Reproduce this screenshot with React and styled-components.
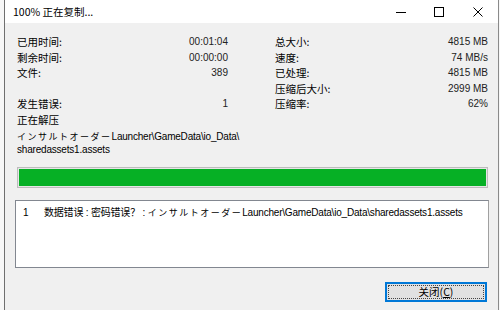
import React from "react";
import styled, { createGlobalStyle } from "styled-components";

const Global = createGlobalStyle`
  html, body { margin: 0; padding: 0; background: #f4f4f4; }
  #root { width: 500px; height: 310px; overflow: hidden; }
  * { box-sizing: border-box; }
`;

const Page = styled.div`
  display: flex;
  width: 500px;
  height: 310px;
  background: #f7f7f7;
  font-family: "Noto Sans CJK SC", "Noto Sans", sans-serif;
  color: #000;
`;

const Strip = styled.div`
  width: ${(p) => p.$w}px;
  flex: none;
  background: #f7f7f7;
`;

const Win = styled.div`
  width: 495px;
  flex: none;
  display: flex;
  flex-direction: column;
  border-left: 1px solid #6f6f6f;
  border-right: 1px solid #8a8a8a;
  background: #f0f0f0;
`;

const TitleBar = styled.div`
  height: 23px;
  background: #fff;
  display: flex;
  align-items: center;
  padding-left: 8px;
`;

const Title = styled.div`
  flex: 1;
  font-size: 10.5px;
  line-height: 12px;
  padding-top: 1px;
`;

const Ctrl = styled.div`
  width: ${(p) => p.$w}px;
  height: 23px;
  display: flex;
  align-items: center;
  justify-content: center;
  flex: none;
`;

const Body = styled.div`
  flex: 1;
  display: flex;
  flex-direction: column;
  padding: 11px 10px 0 12px;
`;

const Stats = styled.div`
  display: grid;
  grid-template-columns: 211px 1fr;
  column-gap: 47px;
`;

const Col = styled.div`
  display: flex;
  flex-direction: column;
`;

const Row = styled.div`
  display: flex;
  justify-content: space-between;
  height: 15.5px;
  line-height: 15.5px;
  font-size: 10.5px;
`;

const Value = styled.span`
  font-family: "Liberation Sans", "Noto Sans CJK SC", sans-serif;
  font-size: 10px;
  color: #222;
`;

const Path = styled.div`
  margin-top: 4px;
  font-size: 10px;
  line-height: 12.5px;
  font-family: "Liberation Sans", "Noto Sans CJK SC", sans-serif;
  letter-spacing: -0.2px;
`;

const Kana = styled.span`
  font-family: "Noto Sans CJK JP", sans-serif;
  letter-spacing: 1.5px;
  font-size: 9px;
`;

const Progress = styled.div`
  margin-top: 10.5px;
  height: 21px;
  border: 1px solid #bcbcbc;
  background: #e6e6e6;
  padding: 1px;
`;

const Fill = styled.div`
  height: 100%;
  background: #06b025;
`;

const List = styled.div`
  margin: 12px -1px 0 -2px;
  height: 68px;
  background: #fff;
  border: 1px solid #828790;
  border-right-color: #a0a0a0;
  padding: 5px 0 0 7px;
`;

const ListRow = styled.div`
  display: flex;
  font-size: 10px;
  line-height: 13px;
  font-family: "Liberation Sans", "Noto Sans CJK SC", sans-serif;
  white-space: nowrap;
  letter-spacing: -0.2px;
`;

const Idx = styled.span`
  width: 21px;
  flex: none;
`;

const Footer = styled.div`
  display: flex;
  justify-content: flex-end;
  margin-top: 14px;
  padding-right: 1px;
`;

const Button = styled.button`
  width: 102px;
  height: 20px;
  background: #e1e1e1;
  border: 2px solid #0078d7;
  padding: 1px;
  font-family: "Noto Sans CJK SC", sans-serif;
  font-size: 10.5px;
  color: #000;
  display: flex;
`;

const Focus = styled.span`
  flex: 1;
  border: 1px dotted #444;
  display: flex;
  align-items: center;
  justify-content: center;
  line-height: 12px;
`;

export default function App() {
  return (
    <>
      <Global />
      <Page>
        <Strip $w={4} />
        <Win>
          <TitleBar>
            <Title>100% 正在复制...</Title>
            <Ctrl $w={38}>
              <svg width="10" height="10" viewBox="0 0 10 10">
                <path d="M0 5.5h10" stroke="#000" strokeWidth="1" />
              </svg>
            </Ctrl>
            <Ctrl $w={38}>
              <svg width="10" height="10" viewBox="0 0 10 10">
                <rect x="0.5" y="0.5" width="9" height="9" fill="none" stroke="#000" strokeWidth="1" />
              </svg>
            </Ctrl>
            <Ctrl $w={40}>
              <svg width="10" height="10" viewBox="0 0 10 10">
                <path d="M0.5 0.5l9 9M9.5 0.5l-9 9" stroke="#000" strokeWidth="1" />
              </svg>
            </Ctrl>
          </TitleBar>
          <Body>
            <Stats>
              <Col>
                <Row><span>已用时间:</span><Value>00:01:04</Value></Row>
                <Row><span>剩余时间:</span><Value>00:00:00</Value></Row>
                <Row><span>文件:</span><Value>389</Value></Row>
                <Row />
                <Row><span>发生错误:</span><Value>1</Value></Row>
              </Col>
              <Col>
                <Row><span>总大小:</span><Value>4815 MB</Value></Row>
                <Row><span>速度:</span><Value>74 MB/s</Value></Row>
                <Row><span>已处理:</span><Value>4815 MB</Value></Row>
                <Row><span>压缩后大小:</span><Value>2999 MB</Value></Row>
                <Row><span>压缩率:</span><Value>62%</Value></Row>
              </Col>
            </Stats>
            <Row><span>正在解压</span></Row>
            <Path>
              <div><Kana>インサルトオーダー</Kana>Launcher\GameData\io_Data\</div>
              <div>sharedassets1.assets</div>
            </Path>
            <Progress><Fill style={{ width: "100%" }} /></Progress>
            <List>
              <ListRow>
                <Idx>1</Idx>
                <span>数据错误 : 密码错误？ : <Kana>インサルトオーダー</Kana>Launcher\GameData\io_Data\sharedassets1.assets</span>
              </ListRow>
            </List>
            <Footer>
              <Button><Focus>关闭(<u>C</u>)</Focus></Button>
            </Footer>
          </Body>
        </Win>
      </Page>
    </>
  );
}
